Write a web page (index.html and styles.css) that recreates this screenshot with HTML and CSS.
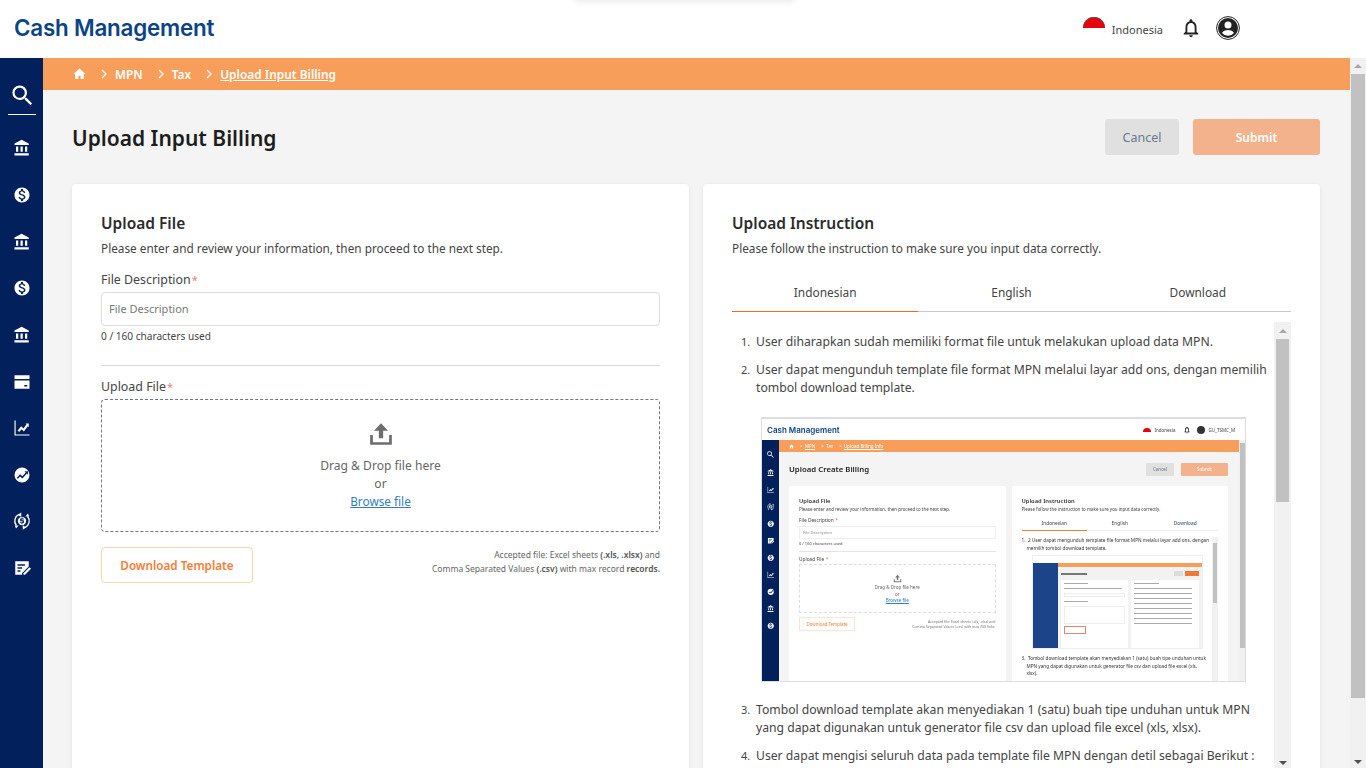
FILE: index.html
```html
<!DOCTYPE html>
<html lang="en">

<head>
    <meta charset="UTF-8">
    <meta name="viewport" content="width=device-width, initial-scale=1.0">
    <title>Upload Input Billing</title>
    <link rel="stylesheet" href="styles.css">
</head>

<body>
    <svg class="defs" width="0" height="0">
        <symbol id="i-bank" viewBox="0 0 24 24"><path d="M4 10v7h3v-7H4zm6 0v7h3v-7h-3zM2 22h19v-3H2v3zm14-12v7h3v-7h-3zm-4.500-9L2 6v2h19V6l-9.500-5z"/></symbol>
        <symbol id="i-money" viewBox="0 0 24 24"><path d="M12 2C6.480 2 2 6.480 2 12s4.480 10 10 10 10-4.480 10-10S17.520 2 12 2zm1.410 16.090V20h-2.670v-1.930c-1.710-.36-3.160-1.460-3.270-3.400h1.960c.1 1.050.82 1.870 2.650 1.870 1.960 0 2.400-.98 2.400-1.590 0-.83-.44-1.610-2.670-2.140-2.480-.6-4.180-1.620-4.180-3.670 0-1.720 1.390-2.840 3.110-3.210V4h2.670v1.950c1.860.45 2.790 1.860 2.850 3.390H14.300c-.05-1.110-.64-1.870-2.220-1.870-1.500 0-2.400.68-2.400 1.640 0 .84.65 1.390 2.670 1.910s4.180 1.390 4.180 3.910c-.01 1.830-1.380 2.830-3.120 3.160z"/></symbol>
        <symbol id="i-card" viewBox="0 0 24 24"><path d="M2 3h20v5H2zM2 10h20v11H2zM15 16v2h4v-2z" fill-rule="evenodd"/></symbol>
        <symbol id="i-chart" viewBox="0 0 24 24"><path d="M2 2h1.500v18.500H22V22H2zM6 15.500l5-6 3 3 4-5.500-1.500-1H21v5l-1.300-1.400-5.200 7-3-3-3 3.500z"/></symbol>
        <symbol id="i-trend" viewBox="0 0 24 24"><path fill-rule="evenodd" d="M12 2a10 10 0 1 0 0 20 10 10 0 0 0 0-20zM5 16l4.500-5 3 2.500L17 8.500l-1.500-1.500H20v4.500l-1.500-1.500-6 6.500-3-2.500-3 3z"/></symbol>
        <symbol id="i-exchange" viewBox="0 0 24 24">
            <path d="M8 3.300A9.500 9.500 0 0 0 4.500 18M16 20.700A9.500 9.500 0 0 0 19.500 6" fill="none" stroke="#fff" stroke-width="1.800"/>
            <path d="M11 .5v6l-4.500-3zM13 23.500v-6l4.500 3zM2.500 18h5l-3.500 4zM21.500 6h-5L20 2z"/>
            <path fill-rule="evenodd" d="M12 6.500a5.500 5.500 0 1 0 0 11 5.500 5.500 0 0 0 0-11zM11.300 7.800h1.400v1h1.800v1.300h-3.200v.9h3.200v3.800h-1.800v1.400h-1.400v-1.400H9.500v-1.300h3.200v-1.200H9.500V8.800h1.800z"/>
        </symbol>
        <symbol id="i-note" viewBox="0 0 24 24"><path fill-rule="evenodd" d="M3 3h18v7l-9 9v2H3zM6 7v2h10V7zM6 11v2h6v-2zM6 15v2h4v-2z"/><path d="M14 19l8-8 2 2-8 8h-2z"/></symbol>
        <symbol id="i-home" viewBox="0 0 24 24"><path d="M10 21v-6h4v6h6v-9h3L12 2 1 12h3v9z"/></symbol>
        <symbol id="i-search" viewBox="0 0 24 24"><path d="M15.500 14h-.79l-.28-.27A6.471 6.471 0 0 0 16 9.500 6.500 6.500 0 1 0 9.500 16c1.610 0 3.090-.59 4.230-1.570l.27.280v.79l5 4.990L20.490 19l-4.990-5zm-6 0C7.010 14 5 11.990 5 9.500S7.010 5 9.500 5 14 7.010 14 9.500 11.990 14 9.500 14z"/></symbol>
        <symbol id="i-upload" viewBox="0 0 24 24"><path d="M12 2 5.500 9H10v7h4V9h4.500zM2 13v9h20v-9h-2.500v6.500h-15V13z"/></symbol>
        <symbol id="i-chevron" viewBox="0 0 8 10"><path d="M2 1l4 4-4 4" fill="none" stroke="currentColor" stroke-width="1.300"/></symbol>
    </svg>

    <div class="toast-shadow"></div>

    <header class="topbar">
        <div class="logo">Cash Management</div>
        <div class="top-right">
            <span class="flag"></span>
            <span class="lang">Indonesia</span>
            <svg class="bell" viewBox="0 0 24 24"><path d="M12 22c1.100 0 2-.9 2-2h-4c0 1.100.9 2 2 2zm6-6v-5c0-3.070-1.630-5.640-4.500-6.320V4c0-.83-.67-1.500-1.500-1.500s-1.500.67-1.500 1.500v.68C7.640 5.360 6 7.920 6 11v5l-2 2v1h16v-1l-2-2zm-2 1H8v-6c0-2.480 1.510-4.500 4-4.500s4 2.020 4 4.500v6z"/></svg>
            <svg class="user" viewBox="0 0 24 24">
                <circle cx="12" cy="12" r="11.400" fill="none" stroke="#222" stroke-width="1"/>
                <path d="M12 2a10 10 0 1 0 0 20 10 10 0 0 0 0-20zm0 3.500a3.500 3.500 0 1 1 0 7 3.500 3.500 0 0 1 0-7zm0 14.300a7.800 7.800 0 0 1-6-2.800c.7-1.900 3.600-3 6-3s5.300 1.100 6 3a7.800 7.800 0 0 1-6 2.800z" fill="#222"/>
            </svg>
        </div>
    </header>

    <div class="shell">
        <nav class="sidebar">
            <div class="side-search"><svg class="side-search-icon"><use href="#i-search"/></svg></div>
            <div class="side-item"><svg class="side-icon"><use href="#i-bank"/></svg></div>
            <div class="side-item"><svg class="side-icon"><use href="#i-money"/></svg></div>
            <div class="side-item"><svg class="side-icon"><use href="#i-bank"/></svg></div>
            <div class="side-item"><svg class="side-icon"><use href="#i-money"/></svg></div>
            <div class="side-item"><svg class="side-icon"><use href="#i-bank"/></svg></div>
            <div class="side-item"><svg class="side-icon"><use href="#i-card"/></svg></div>
            <div class="side-item"><svg class="side-icon"><use href="#i-chart"/></svg></div>
            <div class="side-item"><svg class="side-icon"><use href="#i-trend"/></svg></div>
            <div class="side-item"><svg class="side-icon"><use href="#i-exchange"/></svg></div>
            <div class="side-item"><svg class="side-icon"><use href="#i-note"/></svg></div>
        </nav>

        <main class="main">
            <div class="crumbs">
                <svg class="crumb-home"><use href="#i-home"/></svg>
                <svg class="crumb-sep"><use href="#i-chevron"/></svg>
                <span>MPN</span>
                <svg class="crumb-sep"><use href="#i-chevron"/></svg>
                <span>Tax</span>
                <svg class="crumb-sep"><use href="#i-chevron"/></svg>
                <span class="crumb-current">Upload Input Billing</span>
            </div>

            <div class="content">
                <div class="title-row">
                    <h1 class="page-title">Upload Input Billing</h1>
                    <button class="btn btn-cancel">Cancel</button>
                    <button class="btn btn-submit">Submit</button>
                </div>

                <div class="cards">
                    <section class="card">
                        <h2 class="card-title">Upload File</h2>
                        <p class="card-sub">Please enter and review your information, then proceed to the next step.</p>

                        <label class="field-label">File Description<span class="req">*</span></label>
                        <div class="input">File Description</div>
                        <div class="helper">0 / 160 characters used</div>
                        <div class="divider"></div>

                        <label class="field-label">Upload File<span class="req">*</span></label>
                        <div class="dropzone">
                            <svg class="upload-icon"><use href="#i-upload"/></svg>
                            <div>Drag &amp; Drop file here</div>
                            <div>or</div>
                            <a class="browse">Browse file</a>
                        </div>

                        <div class="download-row">
                            <button class="btn-download">Download Template</button>
                            <p class="accepted">Accepted file: Excel sheets <b>(.xls, .xlsx)</b> and<br>Comma Separated Values <b>(.csv)</b> with max record <b>records.</b></p>
                        </div>
                    </section>

                    <section class="card">
                        <h2 class="card-title">Upload Instruction</h2>
                        <p class="card-sub">Please follow the instruction to make sure you input data correctly.</p>

                        <div class="tabs">
                            <div class="tab tab-active">Indonesian</div>
                            <div class="tab">English</div>
                            <div class="tab">Download</div>
                        </div>

                        <div class="instr">
                            <div class="instr-body">
                                <ol class="steps">
                                    <li>User diharapkan sudah memiliki format file untuk melakukan upload data MPN.</li>
                                    <li>User dapat mengunduh template file format MPN melalui layar add ons, dengan memilih tombol download template.</li>
                                </ol>

                                <!-- screenshot inside the instruction -->
                                <div class="shot">
                                    <div class="shot-top">
                                        <span class="shot-logo">Cash Management</span>
                                        <span class="shot-flag"></span>
                                        <span class="shot-lang">Indonesia</span>
                                        <svg class="shot-bell" viewBox="0 0 24 24"><path d="M12 22c1.100 0 2-.9 2-2h-4c0 1.100.9 2 2 2zm6-6v-5c0-3.070-1.630-5.640-4.500-6.320V4c0-.83-.67-1.500-1.500-1.500s-1.500.67-1.500 1.500v.68C7.640 5.360 6 7.920 6 11v5l-2 2v1h16v-1l-2-2zm-2 1H8v-6c0-2.480 1.510-4.500 4-4.500s4 2.020 4 4.500v6z"/></svg>
                                        <span class="shot-user"></span>
                                        <span class="shot-lang">GU_TSMC_M</span>
                                    </div>
                                    <div class="shot-shell">
                                        <div class="shot-side">
                                            <svg class="shot-side-search"><use href="#i-search"/></svg>
                                            <svg class="shot-side-icon"><use href="#i-bank"/></svg>
                                            <svg class="shot-side-icon"><use href="#i-chart"/></svg>
                                            <svg class="shot-side-icon"><use href="#i-exchange"/></svg>
                                            <svg class="shot-side-icon"><use href="#i-money"/></svg>
                                            <svg class="shot-side-icon"><use href="#i-note"/></svg>
                                            <svg class="shot-side-icon"><use href="#i-money"/></svg>
                                            <svg class="shot-side-icon"><use href="#i-chart"/></svg>
                                            <svg class="shot-side-icon"><use href="#i-trend"/></svg>
                                            <svg class="shot-side-icon"><use href="#i-bank"/></svg>
                                            <svg class="shot-side-icon"><use href="#i-money"/></svg>
                                        </div>
                                        <div class="shot-main">
                                            <div class="shot-crumbs">
                                                <svg class="shot-home"><use href="#i-home"/></svg>
                                                <span>&gt;&nbsp;&nbsp;<u>MPN</u></span>
                                                <span>&gt;&nbsp;&nbsp;Tax</span>
                                                <span>&gt;&nbsp;&nbsp;<u>Upload Billing Info</u></span>
                                            </div>
                                            <div class="shot-content">
                                                <div class="shot-title-row">
                                                    <span class="shot-title">Upload Create Billing</span>
                                                    <span class="shot-cancel">Cancel</span>
                                                    <span class="shot-submit">Submit</span>
                                                </div>
                                                <div class="shot-cards">
                                                    <div class="shot-card">
                                                        <div class="shot-h">Upload File</div>
                                                        <div class="shot-p">Please enter and review your information, then proceed to the next step.</div>
                                                        <div class="shot-label">File Description <i>*</i></div>
                                                        <div class="shot-input">File Description</div>
                                                        <div class="shot-help">0 / 160 characters used</div>
                                                        <div class="shot-line"></div>
                                                        <div class="shot-label">Upload File <i>*</i></div>
                                                        <div class="shot-drop">
                                                            <svg class="shot-up"><use href="#i-upload"/></svg>
                                                            <span>Drag &amp; Drop file here</span>
                                                            <span>or</span>
                                                            <u>Browse file</u>
                                                        </div>
                                                        <div class="shot-dl-row">
                                                            <span class="shot-dl">Download Template</span>
                                                            <span class="shot-note">Accepted file: Excel sheets (.xls, .xlsx) and<br>Comma Separated Values (.csv) with max 200 links.</span>
                                                        </div>
                                                    </div>
                                                    <div class="shot-card">
                                                        <div class="shot-h">Upload Instruction</div>
                                                        <div class="shot-p">Please follow the instruction to make sure you input data correctly.</div>
                                                        <div class="shot-tabs">
                                                            <span class="shot-tab shot-tab-on">Indonesian</span>
                                                            <span class="shot-tab">English</span>
                                                            <span class="shot-tab shot-tab-dl">Download</span>
                                                        </div>
                                                        <div class="shot-instr">
                                                            <div class="shot-instr-body">
                                                                <p class="shot-li">1.&nbsp; 2 User dapat mengunduh template file format MPN melalui layar add ons, dengan<br>&nbsp;&nbsp;&nbsp;&nbsp;memilih tombol download template.</p>
                                                                <div class="mini">
                                                                    <div class="mini-top"></div>
                                                                    <div class="mini-shell">
                                                                        <div class="mini-side"></div>
                                                                        <div class="mini-main">
                                                                            <div class="mini-orange"></div>
                                                                            <div class="mini-head"><span></span><i></i><b></b></div>
                                                                            <div class="mini-cards">
                                                                                <div class="mini-card">
                                                                                    <div class="mini-line"></div>
                                                                                    <div class="mini-line mini-long"></div>
                                                                                    <div class="mini-box"></div>
                                                                                    <div class="mini-line"></div>
                                                                                    <div class="mini-drop"></div>
                                                                                    <div class="mini-mark"></div>
                                                                                </div>
                                                                                <div class="mini-card">
                                                                                    <div class="mini-line"></div>
                                                                                    <div class="mini-line mini-long"></div>
                                                                                    <div class="mini-line mini-long"></div>
                                                                                    <div class="mini-line mini-long"></div>
                                                                                    <div class="mini-line mini-long"></div>
                                                                                    <div class="mini-line mini-long"></div>
                                                                                    <div class="mini-line mini-long"></div>
                                                                                    <div class="mini-line mini-long"></div>
                                                                                    <div class="mini-line mini-long"></div>
                                                                                </div>
                                                                            </div>
                                                                        </div>
                                                                    </div>
                                                                </div>
                                                                <p class="shot-li">3.&nbsp; Tombol download template akan menyediakan 1 (satu) buah tipe unduhan untuk<br>&nbsp;&nbsp;&nbsp;&nbsp;MPN yang dapat digunakan untuk generator file csv dan upload file excel (xls,<br>&nbsp;&nbsp;&nbsp;&nbsp;xlsx).</p>
                                                            </div>
                                                            <div class="shot-scroll"><span></span></div>
                                                        </div>
                                                    </div>
                                                </div>
                                            </div>
                                        </div>
                                        <div class="shot-page-scroll"><span></span></div>
                                    </div>
                                </div>

                                <ol class="steps" start="3">
                                    <li>Tombol download template akan menyediakan 1 (satu) buah tipe unduhan untuk MPN yang dapat digunakan untuk generator file csv dan upload file excel (xls, xlsx).</li>
                                    <li>User dapat mengisi seluruh data pada template file MPN dengan detil sebagai Berikut :</li>
                                </ol>
                            </div>
                            <div class="scrollbar scrollbar-inner">
                                <span class="arrow arrow-up"></span>
                                <span class="thumb thumb-inner"></span>
                                <span class="track-rest"></span>
                                <span class="arrow arrow-down"></span>
                            </div>
                        </div>
                    </section>
                </div>
            </div>
        </main>

        <div class="scrollbar scrollbar-page">
            <span class="arrow arrow-up"></span>
            <span class="thumb thumb-page"></span>
            <span class="track-rest"></span>
            <span class="arrow arrow-down"></span>
        </div>
    </div>
</body>

</html>
```

FILE: styles.css
```css
* {
    box-sizing: border-box;
}

html,
body {
    margin: 0;
    height: 768px;
    overflow: hidden;
}

body {
    font-family: "Noto Sans", "Open Sans", sans-serif;
    color: #333;
    background: #fff;
}

p,
h1,
h2,
ol {
    margin: 0;
}

.defs {
    display: block;
    height: 0;
}

.toast-shadow {
    position: absolute;
    top: -10px;
    left: 575px;
    width: 220px;
    height: 10px;
    box-shadow: 0 2px 6px rgba(0, 0, 0, 0.08);
}

/* top bar */
.topbar {
    height: 58px;
    display: flex;
    align-items: center;
    justify-content: space-between;
    padding: 0 126px 4px 14px;
    background: #fff;
}

.logo {
    font-family: "Inter", sans-serif;
    font-size: 22.400px;
    font-weight: 600;
    letter-spacing: -0.2px;
    color: #0b4387;
}

.top-right {
    display: flex;
    align-items: center;
    padding-top: 2px;
}

.flag {
    width: 22px;
    height: 22px;
    border-radius: 50%;
    background: linear-gradient(#e8000d 50%, #fff 50%);
    box-shadow: inset 0 1px 0 #555;
}

.lang {
    margin: 3px 0 0 7px;
    font-size: 11px;
    color: #444;
}

.bell {
    width: 22px;
    height: 22px;
    margin-left: 17px;
    fill: #222;
}

.user {
    width: 24px;
    height: 24px;
    margin-left: 14px;
}

/* layout */
.shell {
    height: 710px;
    display: flex;
}

.sidebar {
    width: 43px;
    flex: none;
    background: #01205c;
}

.side-search {
    height: 57px;
    margin: 0 7px 10px 8px;
    display: flex;
    align-items: center;
    justify-content: center;
    padding-top: 18px;
    border-bottom: 1px solid #fff;
}

.side-search-icon {
    width: 27px;
    height: 27px;
    fill: #fff;
}

.side-item {
    height: 46.650px;
    display: flex;
    align-items: center;
    justify-content: center;
}

.side-icon {
    width: 18px;
    height: 18px;
    fill: #fff;
}

.main {
    flex: 1;
    min-width: 0;
    display: flex;
    flex-direction: column;
    background: #f4f4f4;
}

/* breadcrumb */
.crumbs {
    height: 32px;
    flex: none;
    display: flex;
    align-items: center;
    padding-left: 30px;
    background: #f79e5b;
    color: #fff;
    font-size: 11.900px;
    font-weight: 600;
}

.crumb-home {
    width: 13px;
    height: 14px;
    fill: #fff;
}

.crumb-sep {
    width: 8px;
    height: 10px;
    margin: 0 7px 0 14px;
    color: #fff;
}

.crumb-current {
    text-decoration: underline;
}

/* page */
.content {
    flex: 1;
    padding: 0 30px 0 29px;
}

.title-row {
    height: 94px;
    display: flex;
    align-items: center;
}

.page-title {
    flex: 1;
    margin-top: 2px;
    font-size: 21px;
    font-weight: 600;
    color: #1d1d1d;
}

.btn {
    height: 36px;
    border: 0;
    border-radius: 3px;
    font-family: inherit;
}

.btn-cancel {
    width: 74px;
    font-size: 12.500px;
    background: #e0e0e0;
    color: #687a8c;
}

.btn-submit {
    width: 127px;
    margin-left: 14px;
    font-size: 12px;
    background: #f4b28c;
    color: #fff;
    font-weight: 600;
}

.cards {
    display: flex;
    gap: 14px;
}

.card {
    flex: 1;
    min-width: 0;
    height: 700px;
    padding: 28px 29px 0;
    background: #fff;
    border-radius: 4px;
    box-shadow: 0 1px 4px rgba(0, 0, 0, 0.08);
}

.card-title {
    font-size: 15.500px;
    font-weight: 600;
    line-height: 22px;
    color: #2b2b2b;
}

.card-sub {
    margin-top: 5px;
    font-size: 11.800px;
    line-height: 18px;
    color: #444;
}

.field-label {
    display: block;
    margin-top: 14px;
    font-size: 12.400px;
    line-height: 18px;
    color: #444;
}

.req {
    margin-left: 1px;
    font-size: 11px;
    color: #e98374;
}

.input {
    height: 34px;
    margin-top: 3px;
    padding-left: 7px;
    border: 1px solid #dcdcdc;
    border-radius: 4px;
    font-size: 11px;
    line-height: 32px;
    color: #777;
}

.helper {
    margin-top: 3px;
    font-size: 10.100px;
    line-height: 15px;
    color: #444;
}

.divider {
    height: 1px;
    margin-top: 21px;
    background: #d9d9d9;
}

.divider + .field-label {
    margin-top: 12px;
}

.dropzone {
    height: 133px;
    margin-top: 3px;
    display: flex;
    flex-direction: column;
    align-items: center;
    padding-top: 21px;
    border: 1px dashed #6e7780;
    border-radius: 4px;
    font-size: 12.100px;
    line-height: 18px;
    color: #666;
}

.upload-icon {
    width: 26px;
    height: 26px;
    margin-bottom: 10px;
    flex: none;
    fill: #6d6d6d;
}

.browse {
    margin-top: -1px;
    font-size: 11.800px;
    color: #2f7fbd;
    text-decoration: underline;
}

.download-row {
    margin-top: 15px;
    display: flex;
    align-items: center;
    justify-content: space-between;
}

.btn-download {
    width: 152px;
    height: 36px;
    border: 1px solid #fdd3a8;
    border-radius: 4px;
    background: #fff;
    font-family: inherit;
    font-size: 11.700px;
    font-weight: 600;
    color: #f57d34;
}

.accepted {
    margin-bottom: 6px;
    font-size: 8.500px;
    line-height: 14px;
    text-align: right;
    color: #666;
}

.accepted b {
    font-weight: 600;
    color: #555;
}

/* instruction tabs */
.tabs {
    display: flex;
    margin-top: 20px;
}

.tab {
    flex: 1;
    height: 35px;
    border-bottom: 1px solid #c8c8c8;
    text-align: center;
    font-size: 11.900px;
    line-height: 30px;
    color: #444;
}

.tab-active {
    border-bottom-color: #f26a21;
}

.instr {
    height: 447px;
    margin-top: 10px;
    display: flex;
}

.instr-body {
    flex: 1;
    min-width: 0;
    overflow: hidden;
    padding-right: 3px;
    font-size: 12.200px;
    line-height: 18px;
    color: #444;
}

.steps {
    padding-left: 24px;
}

.steps li {
    margin-top: 10px;
}

.steps li::marker {
    content: counter(list-item) ".\00a0\00a0";
    font-size: 11px;
}

.instr-body .steps:first-child li:first-child {
    margin-top: 11px;
}

/* fake scrollbars, the real ones do not show in the picture */
.scrollbar {
    flex: none;
    display: flex;
    flex-direction: column;
    align-items: center;
    background: #f1f1f1;
}

.scrollbar-inner {
    width: 17px;
}

.scrollbar-page {
    width: 16px;
}

.thumb {
    flex: none;
    background: #c1c1c1;
}

.thumb-inner {
    width: 13px;
    height: 163px;
}

.thumb-page {
    width: 14px;
    height: 624px;
}

.track-rest {
    flex: 1;
}

.arrow {
    flex: none;
    width: 0;
    height: 0;
    border-left: 4px solid transparent;
    border-right: 4px solid transparent;
}

.arrow-up {
    margin: 6px 0;
    border-bottom: 4px solid #a8a8a8;
}

.scrollbar-inner .arrow-up {
    margin: 7px 0 6px;
}

.arrow-down {
    margin: 5px 0 4px;
    border-top: 4px solid #505050;
}

/* screenshot in the instruction */
.shot {
    width: 485px;
    height: 265px;
    margin: 20px 0 0 29px;
    overflow: hidden;
    display: flex;
    flex-direction: column;
    border: 1px solid #ddd;
    border-top-width: 2px;
    background: #fff;
    color: #444;
    filter: blur(0.5px);
}

.shot + .steps li:first-child {
    margin-top: 19px;
}

.shot-top {
    height: 21px;
    flex: none;
    display: flex;
    align-items: center;
    padding: 0 10px 0 5px;
}

.shot-logo {
    margin-right: auto;
    font-family: "Inter", sans-serif;
    font-size: 8px;
    font-weight: 600;
    line-height: 10px;
    color: #0b4387;
}

.shot-flag {
    width: 8px;
    height: 4px;
    border-radius: 4px 4px 0 0;
    background: #e8000d;
}

.shot-lang {
    margin-left: 3px;
    font-size: 4.500px;
    line-height: 8px;
}

.shot-bell {
    width: 8px;
    height: 8px;
    margin: 0 6px 0 8px;
}

.shot-user {
    width: 8px;
    height: 8px;
    border-radius: 50%;
    background: #333;
}

.shot-shell {
    flex: 1;
    min-height: 0;
    display: flex;
}

.shot-side {
    width: 17px;
    flex: none;
    display: flex;
    flex-direction: column;
    align-items: center;
    padding-top: 9.500px;
    gap: 9.500px;
    background: #01205c;
}

.shot-side-search {
    width: 9px;
    height: 9px;
    flex: none;
    margin-bottom: 1px;
    fill: #fff;
}

.shot-side-icon {
    width: 7.500px;
    height: 7.500px;
    flex: none;
    fill: #fff;
}

.shot-main {
    flex: 1;
    min-width: 0;
    display: flex;
    flex-direction: column;
    background: #f4f4f4;
}

.shot-crumbs {
    height: 12px;
    flex: none;
    display: flex;
    align-items: center;
    gap: 6px;
    padding-left: 10px;
    background: #f79e5b;
    font-size: 4.500px;
    color: #fff;
}

.shot-home {
    width: 5px;
    height: 5px;
    fill: #fff;
}

.shot-content {
    padding: 0 11px 0 10px;
}

.shot-title-row {
    height: 34px;
    display: flex;
    align-items: center;
    gap: 7px;
}

.shot-title {
    flex: 1;
    font-size: 7.800px;
    font-weight: 600;
    color: #222;
}

.shot-cancel,
.shot-submit {
    height: 13px;
    border-radius: 1px;
    font-size: 4.500px;
    line-height: 13px;
    text-align: center;
}

.shot-cancel {
    width: 28px;
    background: #e0e0e0;
    color: #687a8c;
}

.shot-submit {
    width: 47px;
    background: #f4b28c;
    color: #fff;
}

.shot-cards {
    display: flex;
    gap: 6px;
}

.shot-card {
    flex: 1;
    min-width: 0;
    height: 300px;
    padding: 11px 10px 0;
    border-radius: 2px;
    background: #fff;
}

.shot-h {
    font-size: 5.800px;
    font-weight: 600;
    line-height: 8px;
    color: #333;
}

.shot-p {
    margin-top: 1px;
    font-size: 4.450px;
    line-height: 7px;
}

.shot-label {
    margin-top: 4px;
    font-size: 4.800px;
    line-height: 7px;
}

.shot-label i {
    color: #e5604d;
}

.shot-input {
    height: 13px;
    margin-top: 2px;
    padding-left: 3px;
    border: 1px solid #eee;
    font-size: 4px;
    line-height: 11px;
    color: #888;
}

.shot-help {
    margin-top: 1px;
    font-size: 4px;
    line-height: 7px;
}

.shot-line {
    height: 1px;
    margin-top: 4px;
    background: #e4e4e4;
}

.shot-drop {
    height: 49px;
    margin-top: 1px;
    display: flex;
    flex-direction: column;
    align-items: center;
    padding-top: 9px;
    border: 1px dashed #ddd;
    font-size: 4.500px;
    line-height: 6.500px;
    color: #666;
}

.shot-drop u {
    color: #2f7fbd;
}

.shot-up {
    width: 9px;
    height: 9px;
    flex: none;
    margin-bottom: 1px;
    fill: #777;
}

.shot-dl-row {
    margin-top: 4px;
    display: flex;
    align-items: center;
    justify-content: space-between;
}

.shot-dl {
    width: 56px;
    height: 14px;
    border: 1px solid #fde6d0;
    font-size: 4.400px;
    line-height: 12px;
    text-align: center;
    color: #f57d34;
}

.shot-note {
    font-size: 3.500px;
    line-height: 5px;
    text-align: right;
    color: #777;
}

.shot-tabs {
    display: flex;
    margin-top: 5px;
}

.shot-tab {
    flex: 1;
    height: 13px;
    border-bottom: 1px solid #eee;
    font-size: 4.800px;
    line-height: 11px;
    text-align: center;
}

.shot-tab-on {
    border-bottom-color: #f57d34;
}

.shot-tab-dl {
    color: #1c3d78;
}

.shot-instr {
    height: 170px;
    margin-top: 6px;
    display: flex;
}

.shot-instr-body {
    flex: 1;
    min-width: 0;
    overflow: hidden;
}

.shot-li {
    font-size: 4.700px;
    line-height: 7.500px;
    white-space: nowrap;
    color: #333;
}

.shot-scroll {
    width: 6px;
    flex: none;
    background: #f1f1f1;
}

.shot-scroll span {
    display: block;
    width: 4px;
    height: 60px;
    margin: 6px auto 0;
    background: #c1c1c1;
}

.shot-page-scroll {
    width: 6px;
    flex: none;
    background: #f1f1f1;
}

.shot-page-scroll span {
    display: block;
    width: 5px;
    height: 205px;
    margin: 3px auto 0;
    background: #c1c1c1;
}

/* the smallest picture, only blocks */
.mini {
    width: 171px;
    height: 94px;
    margin: 3px 0 6px 10px;
    display: flex;
    flex-direction: column;
    overflow: hidden;
    border: 1px solid #eee;
}

.mini-top {
    height: 7px;
    flex: none;
    background: #fff;
}

.mini-shell {
    flex: 1;
    display: flex;
}

.mini-side {
    width: 25px;
    background: #1c4489;
}

.mini-main {
    flex: 1;
    background: #f2f2f2;
}

.mini-orange {
    height: 4px;
    background: #f79e5b;
}

.mini-head {
    height: 13px;
    display: flex;
    align-items: center;
    gap: 2px;
    padding: 0 3px;
}

.mini-head span {
    width: 26px;
    height: 2px;
    margin-right: auto;
    background: #777;
}

.mini-head i {
    width: 9px;
    height: 5px;
    background: #ddd;
}

.mini-head b {
    width: 14px;
    height: 5px;
    background: #ee7b35;
}

.mini-cards {
    display: flex;
    gap: 3px;
    padding: 0 3px;
}

.mini-card {
    flex: 1;
    height: 70px;
    padding: 3px;
    background: #fff;
}

.mini-line {
    width: 40%;
    height: 1px;
    margin-bottom: 4px;
    background: #aaa;
}

.mini-long {
    width: 95%;
}

.mini-box {
    height: 4px;
    margin-bottom: 4px;
    border: 1px solid #eee;
}

.mini-drop {
    height: 18px;
    margin-bottom: 2px;
    border: 1px solid #eee;
}

.mini-mark {
    width: 22px;
    height: 8px;
    border: 1px solid #e58570;
}
```
